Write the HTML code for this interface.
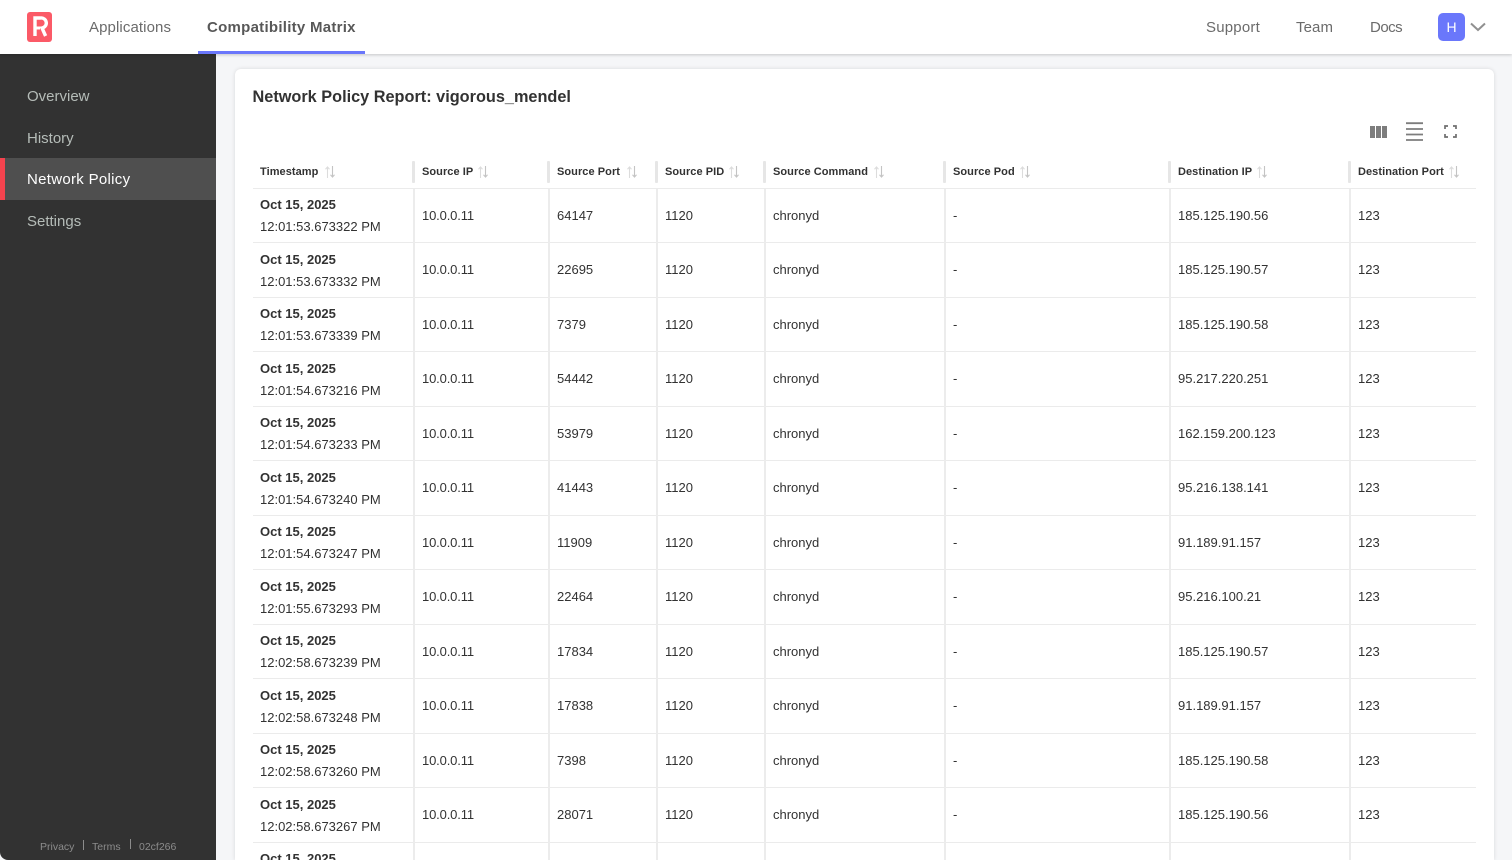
<!DOCTYPE html>
<html><head><meta charset="utf-8"><title>Network Policy</title>
<style>
*{box-sizing:border-box}
html,body{margin:0;padding:0;width:1512px;height:860px;overflow:hidden;background:#f5f6f8;font-family:"Liberation Sans",sans-serif;color:#323232}
#wrap{position:relative;width:1512px;height:860px;overflow:hidden}
.a{position:absolute;white-space:nowrap}
#top{position:absolute;left:0;top:0;width:1512px;height:54px;background:#fff;box-shadow:0 1px 3px rgba(0,0,0,.2);z-index:3}
.nav{font-size:15px;letter-spacing:.1px;color:#6b6b6b;top:19px;line-height:18px}
#side{position:absolute;left:0;top:54px;width:216px;height:806px;background:#323232;border-bottom-left-radius:8px}
.si{position:absolute;left:27px;font-size:15px;color:#b5bcb8;line-height:18px}
#card{position:absolute;left:235px;top:69px;width:1259px;height:791px;background:#fff;border-radius:6px 6px 0 0;box-shadow:0 0 4px rgba(0,0,0,.12)}
#tb{position:absolute;left:253px;top:154.5px;width:1223px;height:705.5px;overflow:hidden}
.h{display:flex;height:34px;border-bottom:1px solid #ebebeb}
.h div{position:relative;font-size:11px;font-weight:bold;letter-spacing:.06px;line-height:34px;color:#323232;white-space:nowrap}
.h div i{position:absolute;right:-1px;top:6px;width:3px;height:22px;background:#e6e6e6;border-radius:1px}
.h svg{width:10px;height:12px;margin-left:5px;vertical-align:-3px}
.r{display:flex;height:54.5px;border-bottom:1px solid #ebebeb}
.r div{position:relative;font-size:13px;line-height:53.5px;white-space:nowrap;color:#323232}
.r div::after{content:"";position:absolute;right:-1px;top:0;bottom:-1px;width:2px;background:#ececec}
.r div:last-child::after{display:none}
.r div.t{line-height:22px;padding-top:5.5px}
.t b{display:block}
.ip{letter-spacing:-.15px}
.w1{width:161px;padding-left:7px}.w2{width:135px;padding-left:8px}.w3{width:108px;padding-left:8px}.w4{width:108px;padding-left:8px}.w5{width:180px;padding-left:8px}.w6{width:225px;padding-left:8px}.w7{width:180px;padding-left:8px}.w8{width:126px;padding-left:8px}
</style></head><body><div id="wrap">
<svg width="0" height="0" style="position:absolute"><symbol id="s" viewBox="0 0 10 12"><path d="M2.5 12V1M.5 3.2 2.5 1l2 2.2" fill="none" stroke="#dcdcdc" stroke-width="1.1"/><path d="M7.5 0v11M5.5 8.8l2 2.2 2-2.2" fill="none" stroke="#c4c4c4" stroke-width="1.1"/></symbol></svg>
<div id="top">
<svg class="a" style="left:27px;top:12px" width="26" height="30" viewBox="0 0 26 30"><rect width="25" height="30" rx="3" fill="#fb5a67"/><path d="M8 24V6h5.5a5 5 0 0 1 1.5 10l3.6 8" fill="none" stroke="#fff" stroke-width="3.4"/><path d="M8 16h5" stroke="#fff" stroke-width="3"/></svg>
<div class="a nav" style="left:89px">Applications</div>
<div class="a nav" style="left:207px;font-weight:bold;color:#585858;letter-spacing:.27px">Compatibility Matrix</div>
<div class="a" style="left:198px;top:51px;width:167px;height:3px;background:#6a77fb"></div>
<div class="a nav" style="left:1206px;letter-spacing:.2px">Support</div>
<div class="a nav" style="left:1296px">Team</div>
<div class="a nav" style="left:1370px;letter-spacing:-.5px">Docs</div>
<div class="a" style="left:1438px;top:13px;width:27px;height:28px;border-radius:5px;background:#6a77fb;color:#fff;font-size:14px;line-height:28px;text-align:center">H</div>
<svg class="a" style="left:1470px;top:22px" width="16" height="10" viewBox="0 0 16 10"><path d="M1 1.5 8 8l7-6.5" fill="none" stroke="#909090" stroke-width="2"/></svg>
</div>
<div id="side">
<div class="si" style="top:34px">Overview</div>
<div class="si" style="top:76px">History</div>
<div class="a" style="left:0;top:104px;width:216px;height:42px;background:#4f4f4f;border-left:5px solid #f4434e"></div>
<div class="si" style="top:117px;color:#fff;letter-spacing:.3px">Network Policy</div>
<div class="si" style="top:159px">Settings</div>
<div class="a" style="left:40px;top:786px;font-size:10.5px;color:#8c8c8c;line-height:14px">Privacy</div>
<div class="a" style="left:83px;top:786px;width:1px;height:10px;background:#8c8c8c"></div>
<div class="a" style="left:92px;top:786px;font-size:10.5px;color:#8c8c8c;line-height:14px">Terms</div>
<div class="a" style="left:130px;top:785px;width:1px;height:10px;background:#8c8c8c"></div>
<div class="a" style="left:139px;top:786px;font-size:10.5px;color:#8c8c8c;line-height:14px">02cf266</div>
</div>
<div id="card"></div>
<div class="a" style="left:252.5px;top:87px;font-size:16.3px;font-weight:bold;line-height:20px;color:#323232">Network Policy Report: vigorous_mendel</div>
<svg class="a" style="left:1370px;top:126px" width="17" height="12" viewBox="0 0 17 12"><path d="M0 0h5v12H0zM6 0h5v12H6zM12 0h5v12h-5z" fill="#7d7d7d"/></svg>
<svg class="a" style="left:1406px;top:122px" width="17" height="19" viewBox="0 0 17 19"><path d="M0 1.2h17M0 7h17M0 12.5h17M0 18h17" stroke="#7d7d7d" stroke-width="1.8"/></svg>
<svg class="a" style="left:1444px;top:125px" width="13" height="13" viewBox="0 0 13 13"><path d="M1 4V1h3M9 1h3v3M12 9v3H9M4 12H1V9" fill="none" stroke="#6f6f6f" stroke-width="1.7"/></svg>
<div id="tb">
<div class="h"><div class="w1">Timestamp<svg style="margin-left:7px"><use href="#s"/></svg><i></i></div><div class="w2">Source IP<svg style="margin-left:4.5px"><use href="#s"/></svg><i></i></div><div class="w3">Source Port<svg style="margin-left:6.5px"><use href="#s"/></svg><i></i></div><div class="w4">Source PID<svg><use href="#s"/></svg><i></i></div><div class="w5">Source Command<svg style="margin-left:6px"><use href="#s"/></svg><i></i></div><div class="w6">Source Pod<svg><use href="#s"/></svg><i></i></div><div class="w7">Destination IP<svg><use href="#s"/></svg><i></i></div><div class="w8">Destination Port<svg><use href="#s"/></svg></div></div>
<div class="r"><div class="w1 t"><b>Oct 15, 2025</b>12:01:53.673322 PM</div><div class="w2 ip">10.0.0.11</div><div class="w3">64147</div><div class="w4">1120</div><div class="w5">chronyd</div><div class="w6">-</div><div class="w7">185.125.190.56</div><div class="w8">123</div></div>
<div class="r"><div class="w1 t"><b>Oct 15, 2025</b>12:01:53.673332 PM</div><div class="w2 ip">10.0.0.11</div><div class="w3">22695</div><div class="w4">1120</div><div class="w5">chronyd</div><div class="w6">-</div><div class="w7">185.125.190.57</div><div class="w8">123</div></div>
<div class="r"><div class="w1 t"><b>Oct 15, 2025</b>12:01:53.673339 PM</div><div class="w2 ip">10.0.0.11</div><div class="w3">7379</div><div class="w4">1120</div><div class="w5">chronyd</div><div class="w6">-</div><div class="w7">185.125.190.58</div><div class="w8">123</div></div>
<div class="r"><div class="w1 t"><b>Oct 15, 2025</b>12:01:54.673216 PM</div><div class="w2 ip">10.0.0.11</div><div class="w3">54442</div><div class="w4">1120</div><div class="w5">chronyd</div><div class="w6">-</div><div class="w7">95.217.220.251</div><div class="w8">123</div></div>
<div class="r"><div class="w1 t"><b>Oct 15, 2025</b>12:01:54.673233 PM</div><div class="w2 ip">10.0.0.11</div><div class="w3">53979</div><div class="w4">1120</div><div class="w5">chronyd</div><div class="w6">-</div><div class="w7">162.159.200.123</div><div class="w8">123</div></div>
<div class="r"><div class="w1 t"><b>Oct 15, 2025</b>12:01:54.673240 PM</div><div class="w2 ip">10.0.0.11</div><div class="w3">41443</div><div class="w4">1120</div><div class="w5">chronyd</div><div class="w6">-</div><div class="w7">95.216.138.141</div><div class="w8">123</div></div>
<div class="r"><div class="w1 t"><b>Oct 15, 2025</b>12:01:54.673247 PM</div><div class="w2 ip">10.0.0.11</div><div class="w3">11909</div><div class="w4">1120</div><div class="w5">chronyd</div><div class="w6">-</div><div class="w7">91.189.91.157</div><div class="w8">123</div></div>
<div class="r"><div class="w1 t"><b>Oct 15, 2025</b>12:01:55.673293 PM</div><div class="w2 ip">10.0.0.11</div><div class="w3">22464</div><div class="w4">1120</div><div class="w5">chronyd</div><div class="w6">-</div><div class="w7">95.216.100.21</div><div class="w8">123</div></div>
<div class="r"><div class="w1 t"><b>Oct 15, 2025</b>12:02:58.673239 PM</div><div class="w2 ip">10.0.0.11</div><div class="w3">17834</div><div class="w4">1120</div><div class="w5">chronyd</div><div class="w6">-</div><div class="w7">185.125.190.57</div><div class="w8">123</div></div>
<div class="r"><div class="w1 t"><b>Oct 15, 2025</b>12:02:58.673248 PM</div><div class="w2 ip">10.0.0.11</div><div class="w3">17838</div><div class="w4">1120</div><div class="w5">chronyd</div><div class="w6">-</div><div class="w7">91.189.91.157</div><div class="w8">123</div></div>
<div class="r"><div class="w1 t"><b>Oct 15, 2025</b>12:02:58.673260 PM</div><div class="w2 ip">10.0.0.11</div><div class="w3">7398</div><div class="w4">1120</div><div class="w5">chronyd</div><div class="w6">-</div><div class="w7">185.125.190.58</div><div class="w8">123</div></div>
<div class="r"><div class="w1 t"><b>Oct 15, 2025</b>12:02:58.673267 PM</div><div class="w2 ip">10.0.0.11</div><div class="w3">28071</div><div class="w4">1120</div><div class="w5">chronyd</div><div class="w6">-</div><div class="w7">185.125.190.56</div><div class="w8">123</div></div>
<div class="r"><div class="w1 t"><b>Oct 15, 2025</b></div><div class="w2"></div><div class="w3"></div><div class="w4"></div><div class="w5"></div><div class="w6"></div><div class="w7"></div><div class="w8"></div></div>
</div>
</div></body></html>
